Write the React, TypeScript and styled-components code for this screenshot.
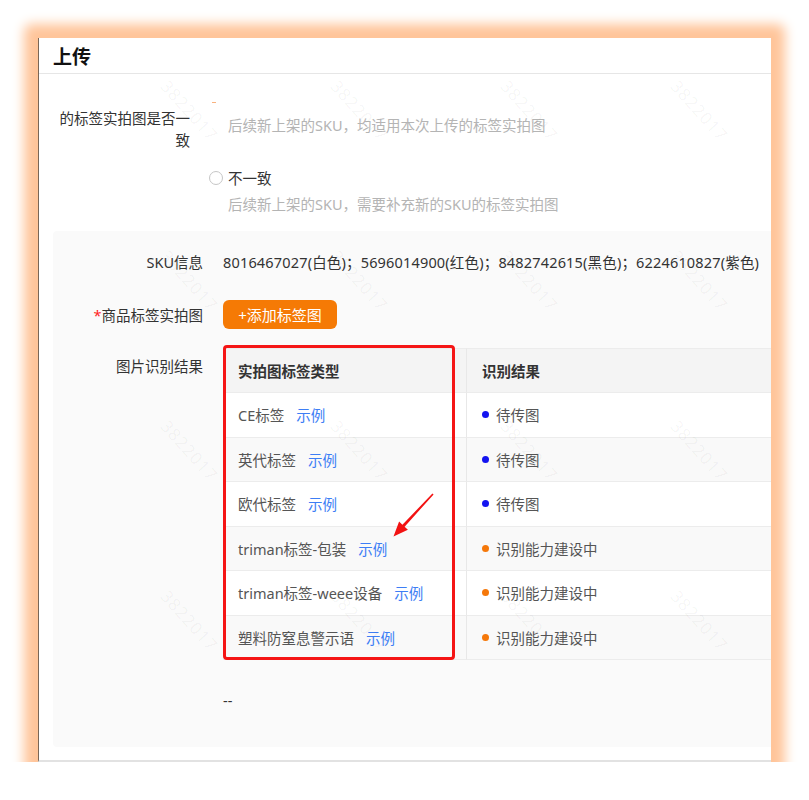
import React from 'react';
import styled, { createGlobalStyle } from 'styled-components';

type Status = 'pending' | 'building';

interface LabelRow {
  name: string;
  status: Status;
}

const rows: LabelRow[] = [
  { name: 'CE标签', status: 'pending' },
  { name: '英代标签', status: 'pending' },
  { name: '欧代标签', status: 'pending' },
  { name: 'triman标签-包装', status: 'building' },
  { name: 'triman标签-weee设备', status: 'building' },
  { name: '塑料防窒息警示语', status: 'building' },
];

const statusText: Record<Status, string> = {
  pending: '待传图',
  building: '识别能力建设中',
};

const statusColor: Record<Status, string> = {
  pending: '#1414f0',
  building: '#f5780a',
};

const App: React.FC = () => {
  return (
    <>
      <GlobalStyle />
      <Frame>
        <Panel>
          <Header>上传</Header>

          <FormRow>
            <TopLabel>的标签实拍图是否一致</TopLabel>
            <Control>
              <Dash />
              <Hint>后续新上架的SKU，均适用本次上传的标签实拍图</Hint>
              <RadioOption>
                <RadioCircle />
                不一致
              </RadioOption>
              <Hint $tight>后续新上架的SKU，需要补充新的SKU的标签实拍图</Hint>
            </Control>
          </FormRow>

          <GrayBox>
            <Field>
              <FieldLabel>SKU信息</FieldLabel>
              <FieldValue $wide>
                8016467027(白色)；5696014900(红色)；8482742615(黑色)；6224610827(紫色)
              </FieldValue>
            </Field>

            <Field $center $gap={27}>
              <FieldLabel>
                <Required>*</Required>商品标签实拍图
              </FieldLabel>
              <AddButton type="button">+添加标签图</AddButton>
            </Field>

            <Field $gap={19}>
              <FieldLabel $offset={7}>图片识别结果</FieldLabel>
              <TableWrap>
                <Table>
                  <HeadCell $first>实拍图标签类型</HeadCell>
                  <HeadCell>识别结果</HeadCell>
                  {rows.map((row, i) => (
                    <React.Fragment key={row.name}>
                      <Cell $first $striped={i % 2 === 1}>
                        {row.name}
                        <Link>示例</Link>
                      </Cell>
                      <Cell $striped={i % 2 === 1}>
                        <Dot $color={statusColor[row.status]} />
                        {statusText[row.status]}
                      </Cell>
                    </React.Fragment>
                  ))}
                </Table>
                <Highlight />
                <Arrow viewBox="0 0 50 52" width="50" height="52">
                  <polygon
                    points="43.6,5.4 14.6,37.7 17.9,40.8 3.5,47.5 9.1,32.6 12.4,35.7 42.4,4.6"
                    fill="#f21212"
                  />
                </Arrow>
              </TableWrap>
            </Field>

            <Field $gap={29}>
              <FieldLabel />
              <FieldValue>--</FieldValue>
            </Field>
          </GrayBox>

          <Watermarks>
            {Array.from({ length: 16 }).map((_, i) => (
              <Mark key={i}>
                <span>3822017</span>
              </Mark>
            ))}
          </Watermarks>
        </Panel>
      </Frame>
    </>
  );
};

const GlobalStyle = createGlobalStyle`
  html, body {
    margin: 0;
    padding: 0;
    background: #fff;
  }

  body {
    font-family: "Noto Sans", "Noto Sans CJK SC", sans-serif;
    font-size: 14.5px;
    color: #333;
  }
`;

const Frame = styled.div`
  margin: 38px 0 0 38px;
  width: 733px;
  height: 724px;
  border-radius: 2px;
  box-shadow: 0 0 12px 14px #ffc59a;
`;

const Panel = styled.div`
  position: relative;
  box-sizing: border-box;
  width: 733px;
  height: 724px;
  background: #fff;
  border-left: 1px solid #7a6656;
  border-bottom: 2px solid #e2e2e2;
  overflow: hidden;
`;

const Header = styled.div`
  height: 35px;
  display: flex;
  align-items: center;
  padding-left: 14px;
  font-size: 19px;
  font-weight: 700;
  color: #111;
  border-bottom: 1px solid #e6e6e6;
`;

const FormRow = styled.div`
  display: flex;
  align-items: flex-start;
  padding: 27px 0 0 19px;
`;

const TopLabel = styled.div`
  width: 132px;
  margin-top: 6px;
  margin-right: 19px;
  flex-shrink: 0;
  text-align: right;
  line-height: 22px;
  color: #333;
`;

const Control = styled.div`
  display: flex;
  flex-direction: column;
`;

const Dash = styled.div`
  width: 4px;
  height: 1px;
  margin: 1px 0 0 3px;
  background: #f9b27e;
`;

const Hint = styled.div<{ $tight?: boolean }>`
  margin-top: ${p => (p.$tight ? 4 : 11)}px;
  padding-left: 19px;
  line-height: 22px;
  color: #b4b4b4;
  white-space: nowrap;
`;

const RadioOption = styled.label`
  display: flex;
  align-items: center;
  margin-top: 31px;
  line-height: 22px;
  color: #333;
`;

const RadioCircle = styled.span`
  box-sizing: border-box;
  width: 14px;
  height: 14px;
  margin-right: 5px;
  border: 1px solid #c6c6c6;
  border-radius: 50%;
  background: #fff;
`;

const GrayBox = styled.div`
  box-sizing: border-box;
  height: 516px;
  margin: 16px -30px 0 14px;
  padding-top: 20px;
  background: #fafafa;
  border-radius: 4px;
`;

const Field = styled.div<{ $center?: boolean; $gap?: number }>`
  display: flex;
  align-items: ${p => (p.$center ? 'center' : 'flex-start')};
  margin-top: ${p => p.$gap ?? 0}px;
`;

const FieldLabel = styled.div<{ $offset?: number }>`
  width: 150px;
  margin-right: 20px;
  margin-top: ${p => p.$offset ?? 0}px;
  flex-shrink: 0;
  text-align: right;
  line-height: 22px;
  color: #333;
`;

const Required = styled.span`
  color: #f22;
`;

const FieldValue = styled.div<{ $wide?: boolean }>`
  line-height: 22px;
  color: #333;
  white-space: nowrap;
  letter-spacing: ${p => (p.$wide ? '0.17px' : 'normal')};
`;

const AddButton = styled.button`
  width: 114px;
  height: 29px;
  padding: 0;
  border: none;
  border-radius: 6px;
  background: #f57a05;
  color: #fff;
  font-family: inherit;
  font-size: 15px;
`;

const TableWrap = styled.div`
  position: relative;
  flex: 1;
`;

const Table = styled.div`
  display: grid;
  grid-template-columns: 244px 1fr;
  grid-template-rows: 45px repeat(6, 44.5px);
`;

const HeadCell = styled.div<{ $first?: boolean }>`
  display: flex;
  align-items: center;
  padding-left: 15px;
  background: #f4f4f4;
  font-weight: 700;
  color: #333;
  border-top: 1px solid #ececec;
  border-bottom: 1px solid #ececec;
  border-right: ${p => (p.$first ? '1px solid #e8e8e8' : 'none')};
`;

const Cell = styled.div<{ $first?: boolean; $striped?: boolean }>`
  display: flex;
  align-items: center;
  padding-left: 15px;
  background: ${p => (p.$striped ? '#f9f9f9' : '#fff')};
  color: #555;
  white-space: nowrap;
  border-bottom: 1px solid #ececec;
  border-right: ${p => (p.$first ? '1px solid #e8e8e8' : 'none')};
`;

const Link = styled.span`
  margin-left: 12px;
  color: #3d7ef5;
`;

const Dot = styled.span<{ $color: string }>`
  width: 7px;
  height: 7px;
  margin-right: 7px;
  border-radius: 50%;
  background: ${p => p.$color};
`;

const Highlight = styled.div`
  position: absolute;
  left: 0;
  top: -3px;
  box-sizing: border-box;
  width: 232px;
  height: 315px;
  border: 3px solid #f51515;
  border-radius: 4px;
  pointer-events: none;
`;

const Arrow = styled.svg`
  position: absolute;
  left: 167px;
  top: 141px;
  pointer-events: none;
`;

const Watermarks = styled.div`
  position: absolute;
  left: 66px;
  top: -13px;
  display: grid;
  grid-template-columns: repeat(4, 170px);
  grid-auto-rows: 170px;
  pointer-events: none;
`;

const Mark = styled.div`
  display: flex;
  align-items: center;
  justify-content: center;

  span {
    transform: rotate(48deg);
    font-size: 17px;
    letter-spacing: 1px;
    color: rgba(0, 0, 0, 0.045);
  }
`;

export default App;
